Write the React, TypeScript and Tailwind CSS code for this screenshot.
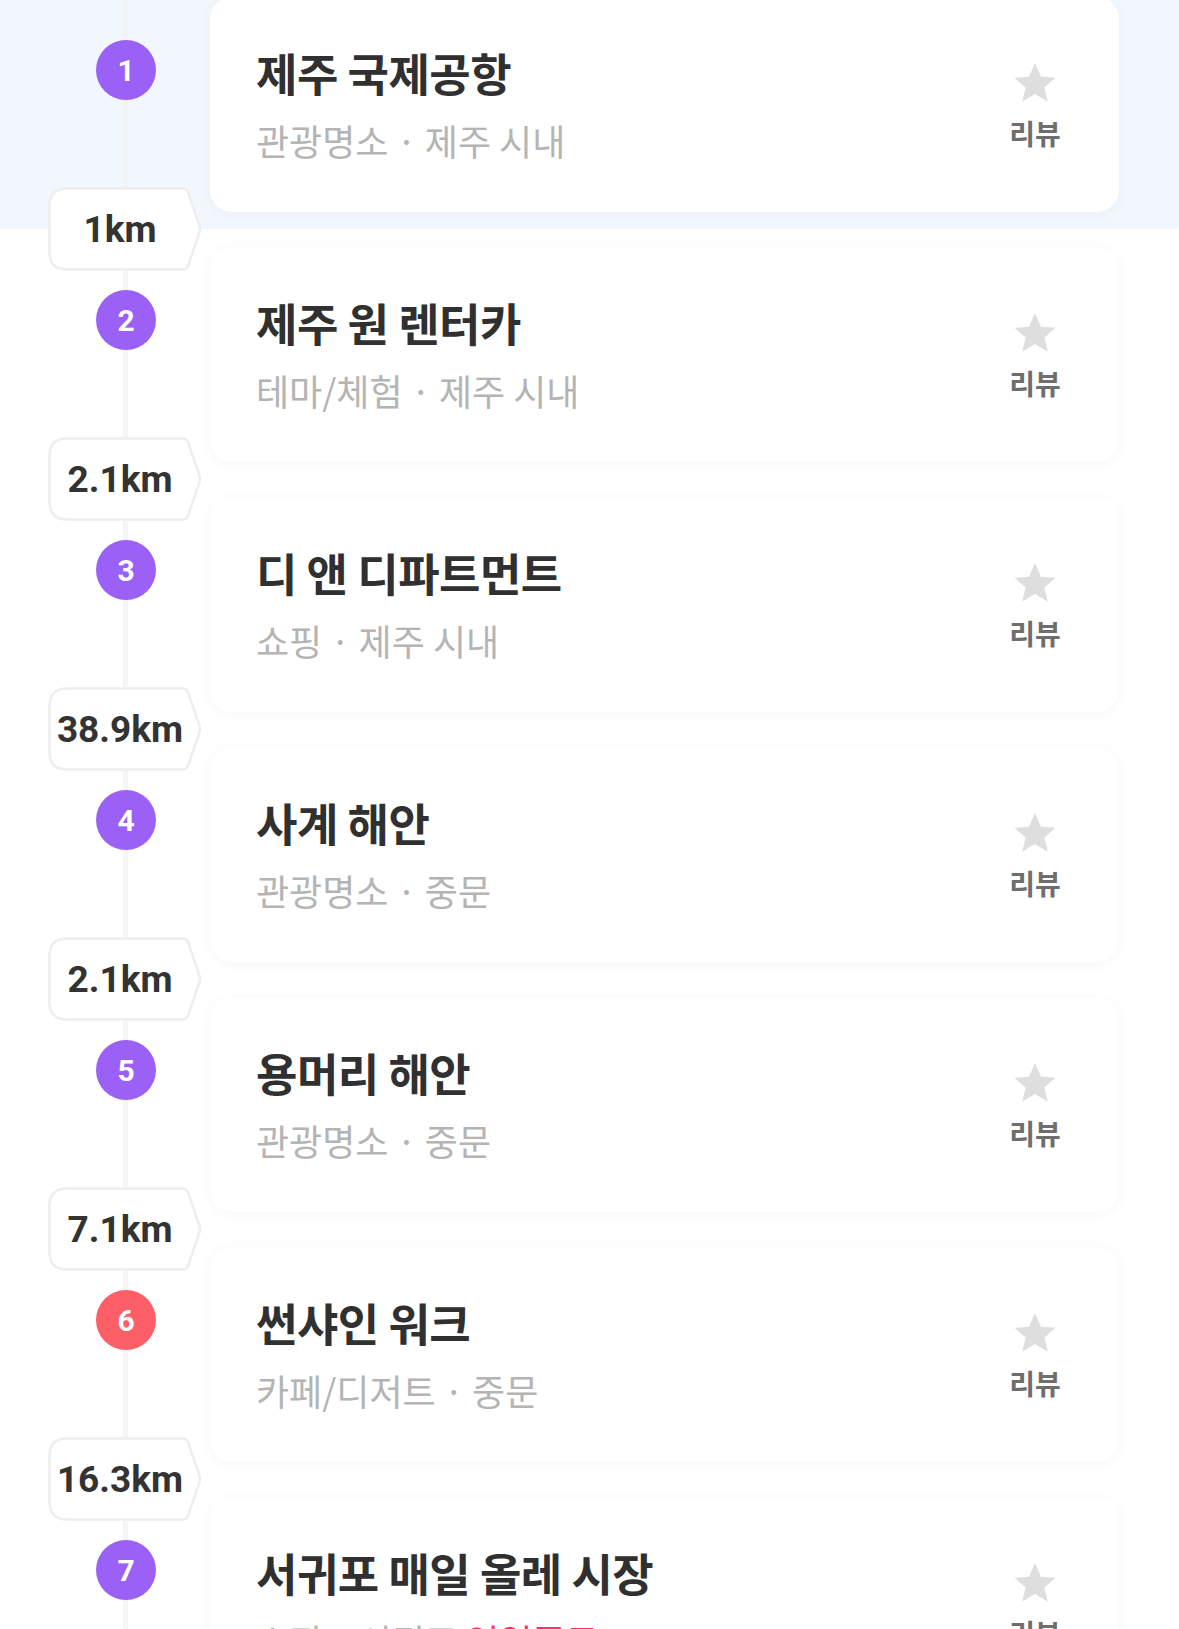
type Place = {
  name: string;
  category: string;
  area: string;
  color: string;
  distance?: string;
  note?: string;
};

const places: Place[] = [
  { name: "제주 국제공항", category: "관광명소", area: "제주 시내", color: "bg-[#9b61f6]" },
  { name: "제주 원 렌터카", category: "테마/체험", area: "제주 시내", color: "bg-[#9b61f6]", distance: "1km" },
  { name: "디 앤 디파트먼트", category: "쇼핑", area: "제주 시내", color: "bg-[#9b61f6]", distance: "2.1km" },
  { name: "사계 해안", category: "관광명소", area: "중문", color: "bg-[#9b61f6]", distance: "38.9km" },
  { name: "용머리 해안", category: "관광명소", area: "중문", color: "bg-[#9b61f6]", distance: "2.1km" },
  { name: "썬샤인 워크", category: "카페/디저트", area: "중문", color: "bg-[#fd5f66]", distance: "7.1km" },
  { name: "서귀포 매일 올레 시장", category: "쇼핑", area: "서귀포", color: "bg-[#9b61f6]", distance: "16.3km", note: "영업종료" },
];

const kr = { fontFamily: '"Noto Sans CJK KR", "Noto Sans", sans-serif' };
const latin = { fontFamily: 'Roboto, "Noto Sans", sans-serif' };

function Star() {
  return (
    <svg width="46" height="46" viewBox="0 0 24 24">
      <path
        d="M12 1.6l3.1 7.1 7.6.6-5.8 5 1.8 7.5L12 17.8l-6.7 4 1.8-7.5-5.8-5 7.6-.6z"
        fill="#dedede"
      />
    </svg>
  );
}

function DistanceBadge({ label }: { label: string }) {
  return (
    <div className="absolute left-[48px] top-[-42px] z-[2] h-[84px] w-[154px]">
      <svg width="154" height="84" viewBox="0 0 154 84" className="absolute inset-0">
        <path
          d="M19 1.5 H135 Q138.5 1.5 140 5 L151.5 39 Q152.5 42 151.5 45 L140 79 Q138.5 82.5 135 82.5 H19 Q1.5 82.5 1.5 65 V19 Q1.5 1.5 19 1.5 Z"
          fill="#ffffff"
          stroke="#eeeeee"
          strokeWidth="2.5"
        />
      </svg>
      <div
        className="relative flex h-full items-center justify-center pr-[10px] text-[37px] font-bold leading-none text-[#333333]"
        style={latin}
      >
        {label}
      </div>
    </div>
  );
}

function Row({ place, index }: { place: Place; index: number }) {
  const first = index === 0;
  return (
    <div
      className={
        first
          ? "relative -mt-[21px] flex bg-[#f2f6fd] pt-[18px] pb-[17px]"
          : "relative flex pt-[18px] pb-[17px]"
      }
    >
      {place.distance && <DistanceBadge label={place.distance} />}
      <div className="w-[210px] shrink-0">
        <div
          className={`relative z-[2] ml-[96px] mt-[43px] flex h-[60px] w-[60px] items-center justify-center rounded-full ${place.color} text-[30px] font-bold text-white`}
          style={latin}
        >
          {index + 1}
        </div>
      </div>
      <div className="mr-[60px] flex h-[215px] flex-1 items-start justify-between rounded-[22px] bg-white pl-[46px] pr-[54px] shadow-[0_2px_14px_rgba(0,0,0,0.035)]">
        <div className="pt-[51px]" style={kr}>
          <div className="text-[45px] font-bold leading-[50px] tracking-[-0.5px] text-[#303030]">
            {place.name}
          </div>
          <div className="mt-[20px] text-[36px] leading-[44px] text-[#b4b4b4]">
            {place.category} · {place.area}
            {place.note && <span className="text-[#ff2e70]"> {place.note}</span>}
          </div>
        </div>
        <div className="flex w-[60px] flex-col items-center pt-[63px]" style={kr}>
          <Star />
          <div className="mt-[10px] text-[28px] font-bold leading-[34px] text-[#6e6e6e]">리뷰</div>
        </div>
      </div>
    </div>
  );
}

export default function App() {
  return (
    <div className="h-[1629px] w-full overflow-hidden bg-white">
      <div className="relative">
        <div className="absolute bottom-0 left-[123px] top-0 z-[1] w-[5px] bg-[#f3f3f3] opacity-80" />
        {places.map((p, i) => (
          <Row key={i} place={p} index={i} />
        ))}
      </div>
    </div>
  );
}
